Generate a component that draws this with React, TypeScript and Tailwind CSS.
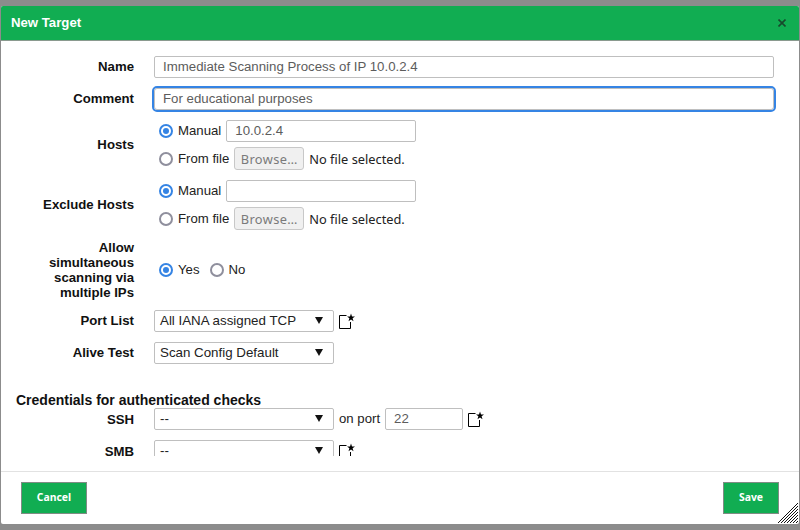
import React from "react";

const inputCls =
  "h-[22px] rounded-[2px] border border-[#bfbfbf] bg-white px-2 text-[13.25px] leading-[20px] text-[#5c5c5c]";

function Radio({ checked }: { checked?: boolean }) {
  return (
    <span
      className={
        "flex h-[14px] w-[14px] shrink-0 items-center justify-center rounded-full border-2 bg-white " +
        (checked ? "border-[#3584e4]" : "border-[#8f8f9d]")
      }
    >
      {checked && <span className="h-[6px] w-[6px] rounded-full bg-[#3584e4]" />}
    </span>
  );
}

function NewIcon() {
  return (
    <svg width="18" height="18" viewBox="0 0 18 18" className="shrink-0">
      <path d="M7.500 3.500H0.500V16.500H11.500V10" fill="none" stroke="#000" strokeWidth="1" />
      <path d="M12 1.600L13 4.400L16 4.500L13.600 6.300L14.500 9.200L12 7.500L9.500 9.200L10.400 6.300L8 4.500L11 4.400Z" fill="#000" />
    </svg>
  );
}

function Select({ value }: { value: string }) {
  return (
    <div className="flex h-[22px] w-[180px] shrink-0 items-center justify-between rounded-[2px] border border-[#bfbfbf] bg-white pl-[5px] pr-[10px] text-[13.33px] text-[#222]">
      <span>{value}</span>
      <svg width="8" height="7" viewBox="0 0 8 7" className="mb-[1px]">
        <path d="M0 0h8L4 7z" fill="#111" />
      </svg>
    </div>
  );
}

// flat labels sit on their row's centre, the others one pixel above it
function Label({ children, flat }: { children: React.ReactNode; flat?: boolean }) {
  return (
    <div
      className={
        "flex items-center justify-end text-right text-[13.2px] font-bold leading-[15px] text-[#111] " +
        (flat ? "" : "-mt-[2px]")
      }
    >
      {children}
    </div>
  );
}

function HostsField({ value }: { value: string }) {
  return (
    <div className="flex flex-col gap-[5px] pl-[5px]">
      <div className="flex h-[22px] items-center text-[13.2px] text-[#222]">
        <Radio checked />
        <span className="ml-[5px]">Manual</span>
        <div className={inputCls + " ml-[5px] w-[190px]"}>{value}</div>
      </div>
      <div className="flex h-[23px] items-center text-[13.2px] text-[#222]">
        <Radio />
        <span className="ml-[5px]">From file</span>
        <div className="ml-[5px] flex h-[23px] w-[70px] items-center justify-center rounded-[3px] border border-[#c8c8c8] bg-[#f0f0f0] pt-[2px] font-['Noto_Sans',sans-serif] text-[12.8px] tracking-[0.4px] text-[#7a7a7a]">
          Browse…
        </div>
        <span className="ml-[5px] pt-[2px] font-['Noto_Sans',sans-serif] text-[12.8px] text-[#222]">
          No file selected.
        </span>
      </div>
    </div>
  );
}

export default function App() {
  return (
    <div className="flex h-[530px] w-[800px] flex-col bg-[#8c8c8c] px-px pb-[6px] pt-[6px] font-['Liberation_Sans',Arial,sans-serif]">
      <div className="flex h-full flex-col overflow-hidden rounded-[2px] bg-white">
        <div className="flex h-[35px] shrink-0 items-center justify-between border-b border-[#8a9a8f] bg-[#11ad52] pl-[10px] pr-[13px]">
          <span className="text-[13.2px] font-bold text-white">New Target</span>
          <svg width="8" height="8" viewBox="0 0 8 8">
            <path d="M0.500 0.500L7.500 7.500M7.500 0.500L0.500 7.500" stroke="#17492c" strokeWidth="1.600" />
          </svg>
        </div>

        <div className="h-[415px] shrink-0 overflow-hidden pl-[15px] pt-[15px]">
          <div className="grid grid-cols-[118px_1fr] gap-x-[20px] gap-y-[10px]">
            <Label>Name</Label>
            <div className={inputCls + " w-[620px]"}>Immediate Scanning Process of IP 10.0.2.4</div>

            <Label>Comment</Label>
            <div className="h-[22px] w-[620px] rounded-[3px] border border-[#bfbfbf] bg-white px-2 text-[13.25px] leading-[20px] text-[#5c5c5c] outline-2 outline-[#3584e4]">
              For educational purposes
            </div>

            <Label>Hosts</Label>
            <HostsField value="10.0.2.4" />

            <Label>Exclude Hosts</Label>
            <HostsField value="" />

            <Label flat>
              Allow
              <br />
              simultaneous
              <br />
              scanning via
              <br />
              multiple IPs
            </Label>
            <div className="flex items-center pl-[5px] text-[13.2px] text-[#222]">
              <Radio checked />
              <span className="ml-[5px]">Yes</span>
              <span className="ml-[10px]">
                <Radio />
              </span>
              <span className="ml-[5px]">No</span>
            </div>

            <Label>Port List</Label>
            <div className="flex items-center gap-[5px]">
              <Select value="All IANA assigned TCP" />
              <NewIcon />
            </div>

            <Label>Alive Test</Label>
            <div>
              <Select value="Scan Config Default" />
            </div>
          </div>

          <div className="mt-[28px] h-[16px] text-[14px] font-bold leading-[16px] text-[#111]">
            Credentials for authenticated checks
          </div>

          <div className="grid grid-cols-[118px_1fr] gap-x-[20px] gap-y-[10px]">
            <Label flat>SSH</Label>
            <div className="flex items-center text-[13.2px] text-[#222]">
              <Select value="--" />
              <span className="ml-[5px]">on port</span>
              <div className={inputCls + " ml-[5px] w-[78px]"}>22</div>
              <span className="ml-[5px]">
                <NewIcon />
              </span>
            </div>

            <Label flat>SMB</Label>
            <div className="flex items-center gap-[5px]">
              <Select value="--" />
              <NewIcon />
            </div>
          </div>
        </div>

        <div className="relative mt-[15px] flex flex-1 items-start justify-between border-t border-[#e2e2e2] px-[20px] pt-[10px]">
          <div className="flex h-[32px] w-[66px] items-center justify-center border border-[#7f8c84] bg-[#11ad52] font-['Noto_Sans',sans-serif] text-[10.4px] font-bold text-white">
            Cancel
          </div>
          <div className="flex h-[32px] w-[56px] items-center justify-center border border-[#7f8c84] bg-[#11ad52] font-['Noto_Sans',sans-serif] text-[10.4px] font-bold text-white">
            Save
          </div>
          <svg width="20" height="20" viewBox="0 0 20 20" className="absolute bottom-[1px] right-[1px]">
            <path
              d="M0 20L20 0M3 20L20 3M6 20L20 6M9 20L20 9M12 20L20 12M15 20L20 15M18 20L20 18"
              stroke="#111"
              strokeWidth="1"
              fill="none"
            />
          </svg>
        </div>
      </div>
    </div>
  );
}
